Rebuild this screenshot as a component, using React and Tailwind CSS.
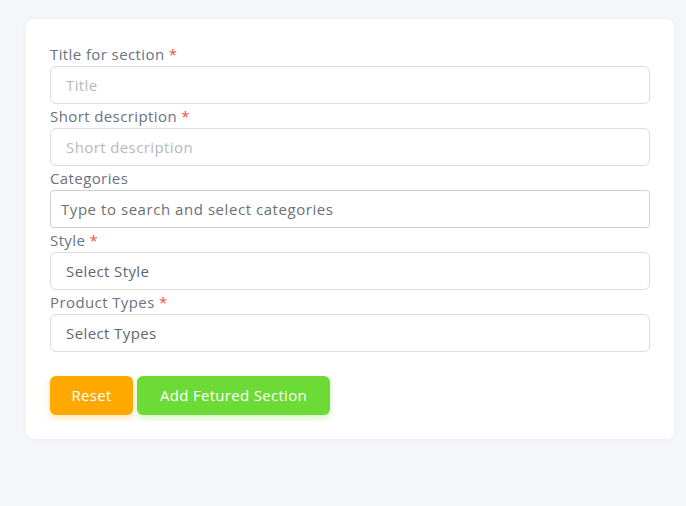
export default function App() {
  const fields = [
    { label: 'Title for section', required: true, placeholder: 'Title', kind: 'input' },
    { label: 'Short description', required: true, placeholder: 'Short description', kind: 'input' },
    { label: 'Categories', required: false, placeholder: 'Type to search and select categories', kind: 'search' },
    { label: 'Style', required: true, placeholder: 'Select Style', kind: 'select' },
    { label: 'Product Types', required: true, placeholder: 'Select Types', kind: 'select' },
  ];

  return (
    <div className="min-h-screen bg-[#f5f6fa] pt-[19px] pl-[26px] pr-[12px] pb-4 font-['Open_Sans',sans-serif]">
      <div className="bg-white rounded-lg shadow-[0_0_6px_rgba(0,0,0,0.04)] px-6 pt-[23px] pb-6">
        {fields.map((f) => (
          <div key={f.label}>
            <label className="block h-6 text-[15px] leading-6 tracking-[0.4px] text-[#6b7280]">
              {f.label}
              {f.required && <span className="text-[#f5533d]"> *</span>}
            </label>
            {f.kind === 'input' && (
              <input
                className="w-full h-[38px] rounded-md border border-[#dcdde0] px-[15px] text-[15px] tracking-[0.4px] text-[#6b7280] placeholder:text-[#b5b8bf] outline-none"
                placeholder={f.placeholder}
              />
            )}
            {f.kind === 'search' && (
              <div className="w-full h-[38px] rounded border border-[#cfd0d3] px-[10px] flex items-center text-[15px] tracking-[0.55px] text-[#6c6f75]">
                {f.placeholder}
              </div>
            )}
            {f.kind === 'select' && (
              <div className="w-full h-[38px] rounded-md border border-[#dcdde0] px-[15px] flex items-center text-[15px] tracking-[0.4px] text-[#5f6670]">
                {f.placeholder}
              </div>
            )}
          </div>
        ))}
        <div className="flex gap-[4px] mt-6">
          <button className="w-[83px] h-[39px] rounded-md bg-[#ffa800] text-white text-[15px] font-medium tracking-[0.3px] shadow-[0_3px_6px_rgba(255,168,0,0.3)]">
            Reset
          </button>
          <button className="w-[193px] h-[39px] rounded-md bg-[#6ddb35] text-white text-[15px] font-medium tracking-[0.3px] shadow-[0_3px_6px_rgba(109,219,53,0.3)]">
            Add Fetured Section
          </button>
        </div>
      </div>
    </div>
  );
}
